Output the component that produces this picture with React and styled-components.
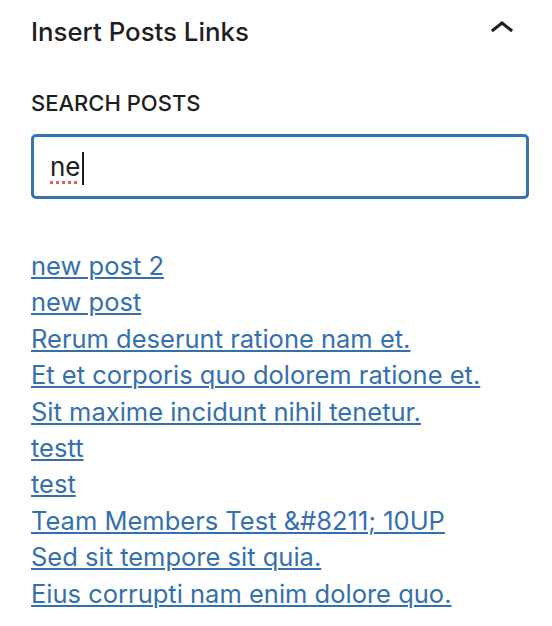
import React from "react";
import styled, { createGlobalStyle } from "styled-components";

const GlobalStyle = createGlobalStyle`
  html, body {
    margin: 0;
    padding: 0;
    background: #ffffff;
  }
  body {
    font-family: Inter, "Noto Sans", "Liberation Sans", sans-serif;
    color: #1e1e1e;
    -webkit-font-smoothing: antialiased;
  }
`;

const Panel = styled.section`
  box-sizing: border-box;
  width: 552px;
  padding: 0 23px 0 31px;
`;

const Header = styled.div`
  display: flex;
  align-items: center;
  justify-content: space-between;
  height: 64px;
`;

const Title = styled.h2`
  margin: 0;
  font-size: 25.8px;
  font-weight: 500;
  line-height: 36px;
  color: #1e1e1e;
`;

const ToggleIcon = styled.svg`
  width: 48px;
  height: 48px;
  margin-right: 3px;
  margin-top: -6px;
  fill: #1e1e1e;
`;

const Field = styled.div`
  display: flex;
  flex-direction: column;
  gap: 16px;
  margin-top: 24px;
`;

const Label = styled.label`
  font-size: 22px;
  font-weight: 500;
  line-height: 30px;
  text-transform: uppercase;
  color: #1e1e1e;
`;

const SearchBox = styled.div`
  box-sizing: border-box;
  height: 65px;
  border: 3px solid #3474b3;
  border-radius: 5px;
  padding: 0 16px;
  display: flex;
  align-items: center;
  font-size: 26px;
  color: #1e1e1e;
`;

const Typed = styled.span`
  text-decoration: underline dotted #e0625a;
  text-decoration-thickness: 3px;
  text-underline-offset: 5px;
`;

const Caret = styled.span`
  display: inline-block;
  width: 2px;
  height: 33px;
  margin-top: 4px;
  background: #1e1e1e;
  margin-left: 1px;
`;

const Results = styled.ul`
  list-style: none;
  margin: 49px 0 0;
  padding: 0;
`;

const Item = styled.li`
  font-size: 25.5px;
  line-height: 36.4px;
`;

const PostLink = styled.a`
  color: #3470b0;
  text-decoration: underline;
  text-decoration-thickness: 2px;
  text-underline-offset: 2px;
`;

const posts = [
  "new post 2",
  "new post",
  "Rerum deserunt ratione nam et.",
  "Et et corporis quo dolorem ratione et.",
  "Sit maxime incidunt nihil tenetur.",
  "testt",
  "test",
  "Team Members Test &#8211; 10UP",
  "Sed sit tempore sit quia.",
  "Eius corrupti nam enim dolore quo.",
];

export default function App() {
  return (
    <>
      <GlobalStyle />
      <Panel>
        <Header>
          <Title>Insert Posts Links</Title>
          <ToggleIcon viewBox="0 0 24 24" aria-hidden="true">
            <path d="M6.5 12.4L12 8l5.5 4.4-.9 1.2L12 10l-4.6 3.6-1-1.2z" />
          </ToggleIcon>
        </Header>
        <Field>
          <Label>Search Posts</Label>
          <SearchBox>
            <Typed>ne</Typed>
            <Caret />
          </SearchBox>
        </Field>
        <Results>
          {posts.map((p) => (
            <Item key={p}>
              <PostLink href="#">{p}</PostLink>
            </Item>
          ))}
        </Results>
      </Panel>
    </>
  );
}
